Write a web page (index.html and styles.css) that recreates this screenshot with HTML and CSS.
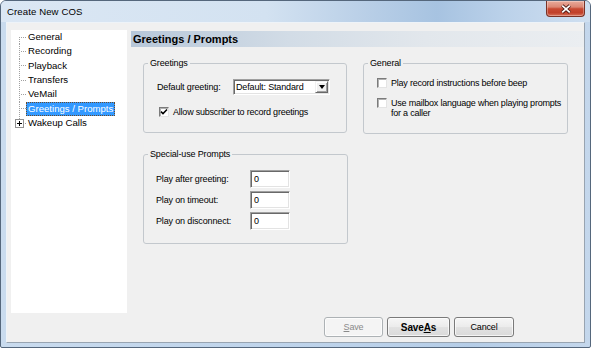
FILE: index.html
```html
<!DOCTYPE html>
<html>
<head>
<meta charset="utf-8">
<link rel="stylesheet" href="styles.css">
</head>
<body>
<div class="window">
  <div class="titlebar">
    <span class="title">Create New COS</span>
    <span class="close">
      <svg width="12" height="10" viewBox="0 0 12 10">
        <path d="M2.2 1.6 L9.8 8.4 M9.8 1.6 L2.2 8.4" stroke="#4a1812" stroke-width="3.4" fill="none"/>
        <path d="M2.2 1.6 L9.8 8.4 M9.8 1.6 L2.2 8.4" stroke="#ffffff" stroke-width="1.7" fill="none"/>
      </svg>
    </span>
  </div>
  <div class="client">
    <div class="main">
      <ul class="tree">
        <li class="node first"><span class="twig"></span><span class="label">General</span></li>
        <li class="node"><span class="twig"></span><span class="label">Recording</span></li>
        <li class="node"><span class="twig"></span><span class="label">Playback</span></li>
        <li class="node"><span class="twig"></span><span class="label">Transfers</span></li>
        <li class="node"><span class="twig"></span><span class="label">VeMail</span></li>
        <li class="node"><span class="twig"></span><span class="label selected">Greetings / Prompts</span></li>
        <li class="node last"><span class="twig"><span class="expander"></span></span><span class="label">Wakeup Calls</span></li>
      </ul>
      <div class="panel">
        <div class="panel-header">Greetings / Prompts</div>
        <div class="panel-body">
          <div class="row">
            <fieldset class="group greetings">
              <legend>Greetings</legend>
              <div class="group-body">
                <div class="field">
                  <span class="field-label">Default greeting:</span>
                  <div class="combo">
                    <span class="combo-text">Default: Standard</span>
                    <span class="combo-btn"><span class="arrow"></span></span>
                  </div>
                </div>
                <div class="check indent">
                  <span class="box"><svg width="8" height="8" viewBox="0 0 8 8"><path d="M1 3.6 L3 5.6 L7 1.4" stroke="#000" stroke-width="1.5" fill="none"/></svg></span>
                  <span class="check-label">Allow subscriber to record greetings</span>
                </div>
              </div>
            </fieldset>
            <fieldset class="group general">
              <legend>General</legend>
              <div class="group-body">
                <div class="check">
                  <span class="box"></span>
                  <span class="check-label">Play record instructions before beep</span>
                </div>
                <div class="check second">
                  <span class="box"></span>
                  <span class="check-label">Use mailbox language when playing prompts for a caller</span>
                </div>
              </div>
            </fieldset>
          </div>
          <fieldset class="group special">
            <legend>Special-use Prompts</legend>
            <div class="group-body">
              <div class="prompt"><span class="prompt-label">Play after greeting:</span><span class="textbox">0</span></div>
              <div class="prompt"><span class="prompt-label">Play on timeout:</span><span class="textbox">0</span></div>
              <div class="prompt"><span class="prompt-label">Play on disconnect:</span><span class="textbox">0</span></div>
            </div>
          </fieldset>
        </div>
      </div>
    </div>
    <div class="buttons">
      <span class="btn disabled"><u>S</u>ave</span>
      <span class="btn bold">Save<u>A</u>s</span>
      <span class="btn">Cancel</span>
    </div>
  </div>
</div>
</body>
</html>
```
FILE: styles.css
```css
html, body {
  margin: 0;
  padding: 0;
  background: #ffffff;
}
body {
  font-family: "Liberation Sans", Arial, sans-serif;
  font-size: 9px;
  color: #000;
}
.window {
  width: 591px;
  height: 348px;
  box-sizing: border-box;
  border: 1px solid #55677c;
  border-radius: 6px 6px 2px 2px;
  background: linear-gradient(to right, #c9dbee, #bcd2ea 60%, #b5cde7 80%, #c4d7ec);
  padding: 0 5px 4px 5px;
  display: flex;
  flex-direction: column;
  overflow: hidden;
}
.titlebar {
  height: 21px;
  flex: none;
  margin: 0 -5px;
  padding: 0 5px 0 6px;
  display: flex;
  justify-content: space-between;
  align-items: flex-start;
  background: linear-gradient(to right, #dbe7f4 0%, #d3e2f1 45%, #b9cfe7 62%, #a7c3e1 74%, #bcd2ea 86%, #cfdff0 100%);
}
.title {
  line-height: 21px;
  font-size: 9.6px;
  letter-spacing: 0.1px;
  color: #000;
}
.close {
  width: 39px;
  height: 16px;
  box-sizing: border-box;
  border: 1px solid #7a3226;
  border-top: 0;
  border-radius: 0 0 4px 4px;
  background: linear-gradient(to bottom, #e9ab9b 0%, #dc8774 40%, #c84a33 52%, #c0402a 78%, #d9735b 100%);
  box-shadow: inset 0 0 0 1px rgba(255, 255, 255, 0.3);
  display: flex;
  align-items: center;
  justify-content: center;
}
.client {
  flex: 1;
  display: flex;
  flex-direction: column;
  background: #f0f0f0;
  border: 1px solid;
  border-color: #eef3f8 #98a4b1 #98a4b1 #eef3f8;
}
.main {
  height: 290px;
  box-sizing: border-box;
  padding: 7px 0 0 4px;
  display: flex;
}
.tree {
  width: 116px;
  height: 283px;
  margin: 0;
  padding: 0;
  list-style: none;
  background: #fff;
}
.node {
  height: 14.33px;
  display: flex;
  align-items: center;
  font-size: 9.6px;
}
.twig {
  align-self: stretch;
  width: 7px;
  margin-left: 8px;
  display: flex;
  align-items: center;
  background-image:
    repeating-linear-gradient(to bottom, #a0a0a0 0 1px, transparent 1px 2px),
    repeating-linear-gradient(to right, #a0a0a0 0 1px, transparent 1px 2px);
  background-size: 1px 100%, 6px 1px;
  background-position: 0 0, 2px 50%;
  background-repeat: no-repeat;
}
.node.first .twig {
  background-size: 1px 50%, 6px 1px;
  background-position: 0 100%, 2px 50%;
}
.node.last .twig {
  background-size: 1px 50%, 6px 1px;
  background-position: 0 0, 2px 50%;
}
.expander {
  width: 9px;
  height: 9px;
  box-sizing: border-box;
  margin-left: -4px;
  border: 1px solid #919191;
  background:
    linear-gradient(#000, #000) center / 5px 1px no-repeat,
    linear-gradient(#000, #000) center / 1px 5px no-repeat,
    #fff;
}
.label {
  height: 14px;
  line-height: 14px;
  padding: 0 2px;
  white-space: nowrap;
}
.label.selected {
  background: #3399ff;
  color: #fff;
  outline: 1px dotted #6b4a2a;
  outline-offset: -1px;
}
.panel {
  flex: 1;
  margin-left: 4px;
  display: flex;
  flex-direction: column;
}
.panel-header {
  height: 16px;
  margin-top: 1px;
  line-height: 16px;
  padding-left: 2px;
  font-weight: bold;
  font-size: 11px;
  background: linear-gradient(to right, #b7c7d9 0%, #d2dce6 35%, #e2e7ec 65%, #ebeef1 100%);
}
.panel-body {
  padding: 10px 0 0 12px;
}
.row {
  display: flex;
  gap: 16px;
  align-items: flex-start;
}
.group {
  margin: 0;
  padding: 0;
  min-width: 0;
  box-sizing: border-box;
  border: 1px solid #c3c8cd;
  border-radius: 3px;
}
.group legend {
  margin-left: 4px;
  padding: 0 2px;
  line-height: 12px;
  letter-spacing: -0.15px;
}
.greetings {
  width: 204px;
  height: 76px;
}
.general {
  width: 205px;
  height: 77px;
}
.special {
  width: 205px;
  height: 96px;
  margin-top: 14px;
}
.greetings .group-body {
  padding: 10px 0 0 13px;
}
.general .group-body {
  padding: 9px 0 0 13px;
}
.special .group-body {
  padding: 10px 0 0 12px;
}
.field {
  display: flex;
  align-items: center;
  height: 16px;
}
.field-label {
  width: 76px;
  letter-spacing: -0.15px;
}
.combo {
  width: 97px;
  height: 16px;
  box-sizing: border-box;
  background: #fff;
  border: 1px solid;
  border-color: #a0a0a0 #ffffff #ffffff #a0a0a0;
  box-shadow: inset 1px 1px 0 #696969, inset -1px -1px 0 #e3e3e3;
  display: flex;
  align-items: stretch;
  padding: 1px;
}
.combo-text {
  flex: 1;
  line-height: 12px;
  padding-left: 1px;
  letter-spacing: -0.15px;
}
.combo-btn {
  width: 13px;
  box-sizing: border-box;
  background: #f0f0f0;
  border: 1px solid;
  border-color: #f0f0f0 #696969 #696969 #f0f0f0;
  box-shadow: inset 1px 1px 0 #ffffff, inset -1px -1px 0 #a0a0a0;
  display: flex;
  align-items: center;
  justify-content: center;
}
.arrow {
  width: 0;
  height: 0;
  border-left: 3.5px solid transparent;
  border-right: 3.5px solid transparent;
  border-top: 4px solid #000;
}
.check {
  display: flex;
  align-items: flex-start;
  line-height: 10px;
}
.check.indent {
  margin: 12px 0 0 2px;
}
.check.second {
  margin-top: 10px;
}
.box {
  width: 10px;
  height: 10px;
  flex: none;
  box-sizing: border-box;
  background: #fff;
  border: 1px solid;
  border-color: #7b7b7b #e4e4e4 #e4e4e4 #7b7b7b;
  box-shadow: inset 1px 1px 0 #b0b0b0;
  display: flex;
  align-items: center;
  justify-content: center;
}
.check-label {
  margin-left: 4px;
  letter-spacing: -0.22px;
}
.prompt {
  display: flex;
  align-items: center;
  height: 18px;
  margin-bottom: 3px;
}
.prompt-label {
  width: 94px;
  letter-spacing: -0.15px;
}
.textbox {
  width: 40px;
  height: 18px;
  box-sizing: border-box;
  background: #fff;
  border: 1px solid;
  border-color: #a0a0a0 #ffffff #ffffff #a0a0a0;
  box-shadow: inset 1px 1px 0 #696969, inset -1px -1px 0 #e3e3e3;
  padding-left: 3px;
  line-height: 16px;
}
.buttons {
  display: flex;
  justify-content: flex-end;
  gap: 4px;
  padding: 4px 70px 5px 0;
}
.btn {
  height: 20px;
  width: 60px;
  box-sizing: border-box;
  border: 1px solid #7a7a7a;
  border-radius: 3px;
  background: linear-gradient(to bottom, #f6f6f6 0%, #ececec 48%, #e2e2e2 52%, #d9d9d9 100%);
  box-shadow: inset 0 0 0 1px rgba(255, 255, 255, 0.7);
  display: flex;
  align-items: center;
  justify-content: center;
  font-size: 9px;
  letter-spacing: -0.15px;
}
.btn.disabled {
  width: 59px;
  color: #8a8a8a;
  border-color: #adb2b5;
  background: #f4f4f4;
}
.btn.bold {
  width: 63px;
  font-weight: bold;
  font-size: 10px;
}
```
